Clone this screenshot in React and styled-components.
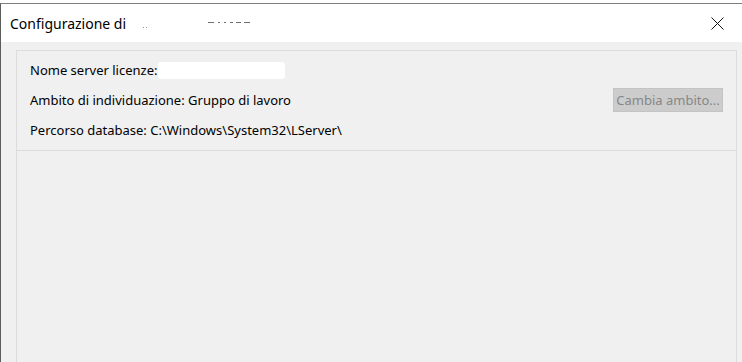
import React from "react";
import styled, { createGlobalStyle } from "styled-components";

const Global = createGlobalStyle`
  html, body { margin: 0; padding: 0; background: #ffffff; }
  body { font-family: "Noto Sans", "Open Sans", sans-serif; overflow: hidden; }
  #root { height: 362px; }
`;

const Window = styled.div`
  margin-top: 3px;
  height: 359px;
  border-top: 1px solid #7f7f7f;
  border-left: 1px solid #5c5c5c;
  display: flex;
  flex-direction: column;
  box-sizing: border-box;
`;

const TitleBar = styled.div`
  height: 38px;
  background: #ffffff;
  display: flex;
  align-items: center;
  padding: 0 9px;
  flex-shrink: 0;
`;

const Title = styled.div`
  font-size: 14px;
  color: #000;
  display: flex;
  align-items: center;
  flex: 1;
`;

const Redacted = styled.span`
  display: inline-block;
  width: ${(p) => p.$w}px;
  height: ${(p) => p.$h}px;
  margin-left: ${(p) => p.$ml || 0}px;
  background: #ffffff;
  border-radius: 3px;
  position: relative;
`;

const Dash = styled.span`
  position: absolute;
  top: ${(p) => p.$t}px;
  left: ${(p) => p.$l}px;
  width: ${(p) => p.$w}px;
  height: 1px;
  background: ${(p) => p.$c || "#9a9a9a"};
`;

const Close = styled.button`
  border: none;
  background: transparent;
  width: 24px;
  height: 24px;
  padding: 0;
  margin-right: 4px;
  display: flex;
  align-items: center;
  justify-content: center;
`;

const Body = styled.div`
  flex: 1;
  background: #f0f0f0;
  padding: 8px 5px 0 15px;
  display: flex;
`;

const Panel = styled.div`
  flex: 1;
  border: 1px solid #dcdcdc;
  border-bottom: none;
  display: flex;
  flex-direction: column;
`;

const InfoSection = styled.div`
  padding: 4px 13px 5px 13px;
  border-bottom: 1px solid #dcdcdc;
  display: flex;
  flex-direction: column;
`;

const Row = styled.div`
  height: 30px;
  display: flex;
  align-items: center;
  justify-content: space-between;
  font-size: 13px;
  color: #000;
`;

const Label = styled.span`
  display: flex;
  align-items: center;
  white-space: pre;
`;

const Button = styled.button`
  width: 110px;
  height: 24px;
  background: #cccccc;
  border: 1px solid #c4c4c4;
  color: #878787;
  font-family: "Noto Sans", "Open Sans", sans-serif;
  font-size: 13px;
  padding: 0;
`;

export default function App() {
  return (
    <>
      <Global />
      <Window>
        <TitleBar>
          <Title>
            Configurazione di
            <Redacted $w={150} $h={16} $ml={4}>
              <Dash $t={12} $l={13} $w={1} />
              <Dash $t={12} $l={16} $w={1} />
              <Dash $t={7} $l={78} $w={6} $c="#6f6f6f" />
              <Dash $t={7} $l={88} $w={2} $c="#6f6f6f" />
              <Dash $t={7} $l={94} $w={2} $c="#6f6f6f" />
              <Dash $t={7} $l={100} $w={3} $c="#6f6f6f" />
              <Dash $t={7} $l={106} $w={5} $c="#6f6f6f" />
              <Dash $t={7} $l={114} $w={6} $c="#6f6f6f" />
            </Redacted>
          </Title>
          <Close aria-label="Chiudi">
            <svg width="13" height="13" viewBox="0 0 13 13">
              <path d="M0.5 0.5 L12.5 12.5 M12.5 0.5 L0.5 12.5" stroke="#111" strokeWidth="1" fill="none" />
            </svg>
          </Close>
        </TitleBar>
        <Body>
          <Panel>
            <InfoSection>
              <Row>
                <Label>
                  Nome server licenze:
                  <Redacted $w={127} $h={17} $ml={1} />
                </Label>
              </Row>
              <Row>
                <Label>Ambito di individuazione: Gruppo di lavoro</Label>
                <Button disabled>Cambia ambito...</Button>
              </Row>
              <Row>
                <Label>Percorso database: C:\Windows\System32\LServer\</Label>
              </Row>
            </InfoSection>
          </Panel>
        </Body>
      </Window>
    </>
  );
}
